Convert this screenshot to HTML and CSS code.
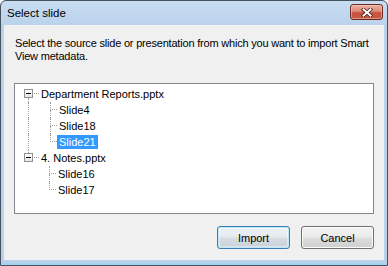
FILE: index.html
```html
<!DOCTYPE html>
<html>
<head>
<meta charset="utf-8">
<link rel="stylesheet" href="styles.css">
</head>
<body>
<div class="window">
  <div class="titlebar">
    <span class="title">Select slide</span>
    <button class="close" aria-label="Close">
      <svg width="12" height="9" viewBox="0 0 12 9">
        <path d="M2.5 1.5 L9.5 7.5 M9.5 1.5 L2.5 7.5" stroke="#4a1f16" stroke-width="3.6" stroke-linecap="square" fill="none"/>
        <path d="M2.5 1.5 L9.5 7.5 M9.5 1.5 L2.5 7.5" stroke="#ffffff" stroke-width="2" stroke-linecap="square" fill="none"/>
      </svg>
    </button>
  </div>
  <div class="client">
    <p class="desc">Select the source slide or presentation from which you want to import Smart View metadata.</p>
    <div class="tree">
      <div class="row">
        <div class="node"><span class="seg"></span><span class="box"><span class="minus"></span></span><span class="seg line"></span></div>
        <span class="dash"></span>
        <span class="label">Department Reports.pptx</span>
      </div>
      <div class="row">
        <div class="indent line"></div>
        <div class="conn"><span class="up"></span><span class="down line"></span></div>
        <span class="label">Slide4</span>
      </div>
      <div class="row">
        <div class="indent line"></div>
        <div class="conn"><span class="up"></span><span class="down line"></span></div>
        <span class="label">Slide18</span>
      </div>
      <div class="row">
        <div class="indent line"></div>
        <div class="conn"><span class="up"></span><span class="down"></span></div>
        <span class="label selected">Slide21</span>
      </div>
      <div class="row">
        <div class="node"><span class="seg line"></span><span class="box"><span class="minus"></span></span><span class="seg"></span></div>
        <span class="dash"></span>
        <span class="label">4. Notes.pptx</span>
      </div>
      <div class="row">
        <div class="indent"></div>
        <div class="conn"><span class="up"></span><span class="down line"></span></div>
        <span class="label">Slide16</span>
      </div>
      <div class="row">
        <div class="indent"></div>
        <div class="conn"><span class="up"></span><span class="down"></span></div>
        <span class="label">Slide17</span>
      </div>
    </div>
    <div class="buttons">
      <button class="btn default">Import</button>
      <button class="btn">Cancel</button>
    </div>
  </div>
</div>
</body>
</html>
```

FILE: styles.css
```css
html, body {
  margin: 0;
  padding: 0;
  background: #ffffff;
}

body {
  font-family: "Liberation Sans", Arial, sans-serif;
  font-size: 11px;
  color: #000;
}

.window {
  width: 388px;
  height: 266px;
  box-sizing: border-box;
  border: 1px solid #46515e;
  border-radius: 6px 6px 0 0;
  background: linear-gradient(#c9ddf2 0px, #bad2eb 24px, #b9d1ea 100%);
  padding: 0 3px 5px 3px;
  display: flex;
  flex-direction: column;
  box-shadow: inset 0 -2px 0 #a4d3f1;
}

.titlebar {
  height: 24px;
  flex: none;
  display: flex;
  justify-content: space-between;
  align-items: center;
  padding: 0 1px 0 3px;
}

.title {
  font-size: 11.5px;
  color: #000;
}

.close {
  align-self: flex-start;
  margin-top: 3px;
  width: 33px;
  height: 16px;
  padding: 0;
  border: 1px solid #6a2a1f;
  border-radius: 3px;
  background: linear-gradient(#eab0a2 0%, #dd8a78 45%, #c9533e 55%, #c65a44 100%);
  box-shadow: inset 0 0 0 1px rgba(255, 220, 210, 0.45);
  display: flex;
  align-items: center;
  justify-content: center;
}

.close svg {
  display: block;
}

.client {
  flex: 1;
  background: #f0f0f0;
  display: flex;
  flex-direction: column;
  padding: 12px 10px 11px 10px;
}

.desc {
  margin: 0 -6px 20px 1px;
  line-height: 13px;
  letter-spacing: -0.2px;
}

.tree {
  height: 131px;
  flex: none;
  box-sizing: border-box;
  border: 1px solid #828790;
  background: #ffffff;
  padding-top: 2px;
}

.row {
  height: 16px;
  display: flex;
  align-items: center;
}

.node {
  margin-left: 9px;
  width: 9px;
  height: 16px;
  display: flex;
  flex-direction: column;
}

.seg {
  height: 3px;
  margin-left: 4px;
}

.seg + .box + .seg {
  height: 4px;
}

.seg.line {
  border-left: 1px dotted #a0a0a0;
}

.box {
  width: 9px;
  height: 9px;
  box-sizing: border-box;
  border: 1px solid #919191;
  background: linear-gradient(#ffffff, #e6e6e6);
  display: flex;
  align-items: center;
  justify-content: center;
}

.minus {
  width: 5px;
  height: 1px;
  background: #000;
}

.dash {
  width: 5px;
  margin-left: 1px;
  height: 0;
  border-top: 1px dotted #a0a0a0;
  margin-top: -1px;
}

.label {
  padding: 0 2px;
  height: 14px;
  line-height: 14px;
  white-space: nowrap;
}

.label.selected {
  background: #3399ff;
  color: #ffffff;
}

.indent {
  margin-left: 13px;
  width: 21px;
  height: 16px;
}

.indent.line {
  border-left: 1px dotted #a0a0a0;
}

.conn {
  width: 7px;
  height: 16px;
  display: flex;
  flex-direction: column;
}

.conn .up {
  height: 7px;
  border-left: 1px dotted #a0a0a0;
  border-bottom: 1px dotted #a0a0a0;
}

.conn .down {
  height: 8px;
}

.conn .down.line {
  border-left: 1px dotted #a0a0a0;
}

.buttons {
  margin-top: 12px;
  display: flex;
  justify-content: flex-end;
  gap: 11px;
}

.btn {
  width: 73px;
  height: 23px;
  padding: 0;
  border: 1px solid #707070;
  border-radius: 3px;
  background: linear-gradient(#f2f2f2 0%, #ebebeb 48%, #dddddd 52%, #cfcfcf 100%);
  box-shadow: inset 0 0 0 1px #fbfbfb;
  font-family: "Liberation Sans", Arial, sans-serif;
  font-size: 11px;
  color: #000;
}

.btn.default {
  border-color: #3c7fb1;
  box-shadow: inset 0 0 0 1px #bde6f9, inset 0 0 0 2px rgba(255, 255, 255, 0.4);
  background: linear-gradient(#eef2f5 0%, #e6eaee 48%, #d6dde2 52%, #c9d1d7 100%);
}
```
